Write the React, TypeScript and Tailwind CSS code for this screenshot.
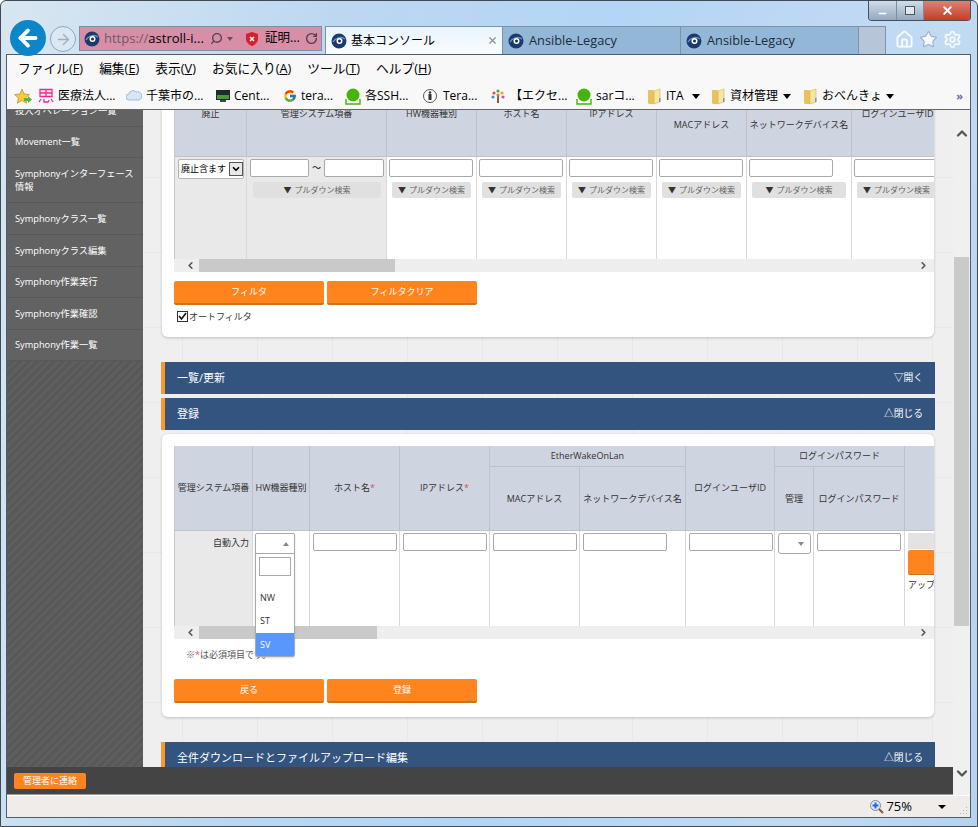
import React from "react";
import { ArrowLeft, ArrowRight, ChevronDown, ChevronLeft, ChevronRight, ChevronUp, Home, RotateCw, Search, Settings, Star, X, Minus } from "lucide-react";
import { FcGoogle } from "react-icons/fc";

const Fav = () => (
  <svg width="16" height="16" viewBox="0 0 16 16" className="shrink-0">
    <circle cx="8" cy="8" r="7.5" fill="#1d3a6e" />
    <path d="M2 9c2-4 8-6 12-3" stroke="#6f93c4" strokeWidth="1.4" fill="none" />
    <circle cx="8.5" cy="8" r="3" fill="#fff" />
    <circle cx="8.5" cy="8" r="1.5" fill="#17305e" />
  </svg>
);
const Folder = () => (
  <svg width="15" height="17" viewBox="0 0 15 17" className="shrink-0">
    <path d="M1 2h5l1 1v13H2l-1-1z" fill="#e8c35c" />
    <path d="M7 3l6-2v13l-6 2z" fill="#f8e59d" stroke="#d8b24e" strokeWidth=".6" />
    <rect x="12" y="10" width="1.5" height="4" fill="#5aa0d8" />
  </svg>
);
const Caret = () => <span className="ml-[6px] h-0 w-0 border-x-[4.5px] border-t-[5px] border-x-transparent border-t-black" />;
const GreenQ = () => (
  <svg width="16" height="18" viewBox="0 0 16 18" className="shrink-0">
    <path d="M1 12v5h14v-5" stroke="#46b40a" strokeWidth="1.4" fill="#fff" />
    <circle cx="8" cy="8" r="6.5" fill="#46b40a" />
  </svg>
);

const favItems: { icon: React.ReactNode; label: string; w: number; mr: number; gap: number; caret?: boolean }[] = [
  {
    icon: (
      <svg width="16" height="16" viewBox="0 0 16 16" className="shrink-0">
        <path d="M2 1.500h12v7H2zM2 5h12M8 1.500v7M1 14l2-3M6 11v3h4l1-2M13 11l2 3" stroke="#ec2a8c" strokeWidth="1.3" fill="#fff5f0" />
      </svg>
    ),
    label: "医療法人...",
    w: 60,
    mr: 8,
    gap: 4,
  },
  {
    icon: (
      <svg width="16" height="16" viewBox="0 0 16 16" className="shrink-0">
        <path d="M3 12a3 3 0 0 1 0-6 4 4 0 0 1 7-2 3.500 3.500 0 0 1 3 8z" fill="#d8e6f4" stroke="#9cbbdc" />
      </svg>
    ),
    label: "千葉市の...",
    w: 60,
    mr: 9,
    gap: 4,
  },
  {
    icon: (
      <svg width="16" height="16" viewBox="0 0 16 16" className="shrink-0">
        <rect x="1" y="2" width="14" height="10" fill="#1f2a33" />
        <rect x="2" y="7" width="12" height="4" fill="#4a9a3a" />
        <rect x="5" y="12" width="6" height="2" fill="#444" />
      </svg>
    ),
    label: "Cent...",
    w: 39,
    mr: 10,
    gap: 3,
  },
  { icon: <FcGoogle size={14} className="shrink-0" />, label: "tera...", w: 36, mr: 8, gap: 4 },
  { icon: <GreenQ />, label: "各SSH...", w: 49, mr: 8, gap: 4 },
  {
    icon: (
      <svg width="16" height="16" viewBox="0 0 16 16" className="shrink-0">
        <circle cx="8" cy="8" r="6.500" fill="#fff" stroke="#555" />
        <rect x="6.500" y="6" width="3" height="6" fill="#333" />
        <circle cx="8" cy="4.500" r="1.300" fill="#333" />
      </svg>
    ),
    label: "Tera...",
    w: 37,
    mr: 10,
    gap: 5,
  },
  {
    icon: (
      <svg width="16" height="16" viewBox="0 0 16 16" className="shrink-0">
        <rect x="7" y="8" width="2" height="7" fill="#8a5a3a" />
        <circle cx="4" cy="5" r="1.600" fill="#e0574f" />
        <circle cx="8" cy="3" r="1.600" fill="#4aa84a" />
        <circle cx="12" cy="5" r="1.600" fill="#e8a62f" />
        <circle cx="3" cy="9" r="1.600" fill="#4a8fd8" />
        <circle cx="13" cy="9" r="1.600" fill="#c05ab0" />
        <circle cx="8" cy="7" r="1.600" fill="#e8743a" />
      </svg>
    ),
    label: "【エクセ...",
    w: 58,
    mr: 8,
    gap: 4,
  },
  { icon: <GreenQ />, label: "sarコ...", w: 42, mr: 9, gap: 4 },
  { icon: <Folder />, label: "ITA", w: 20, mr: 11, gap: 4, caret: true },
  { icon: <Folder />, label: "資材管理", w: 47, mr: 12, gap: 4, caret: true },
  { icon: <Folder />, label: "おべんきょ", w: 58, mr: 0, gap: 4, caret: true },
];

const menu = [
  ["ファイル(", "F", ")"],
  ["編集(", "E", ")"],
  ["表示(", "V", ")"],
  ["お気に入り(", "A", ")"],
  ["ツール(", "T", ")"],
  ["ヘルプ(", "H", ")"],
];

const side: [string, string][] = [
  ["投入オペレーション一覧", "h-[31.500px] -mt-[15px]"],
  ["Movement一覧", "h-[31.500px]"],
  ["Symphonyインターフェース情報", "h-[45px]"],
  ["Symphonyクラス一覧", "h-[32px]"],
  ["Symphonyクラス編集", "h-[31.500px]"],
  ["Symphony作業実行", "h-[31.500px]"],
  ["Symphony作業確認", "h-[31.500px]"],
  ["Symphony作業一覧", "h-[31.500px]"],
];

const H = ({ children, className = "" }: { children?: React.ReactNode; className?: string }) => (
  <div className={`flex items-center justify-center whitespace-nowrap border-r border-b border-[#bfc2c6] bg-[#ced5e0] text-[9px] text-[#333] ${className}`}>{children}</div>
);
const Req = () => <span className="text-[#e05050]">*</span>;
const Inp = ({ className = "w-[84px]" }: { className?: string }) => (
  <div className={`h-[18px] shrink-0 rounded-[2px] border border-[#a9a9a9] bg-white ${className}`} />
);
const Pull = ({ className = "w-[79px]" }: { className?: string }) => (
  <div className={`mt-[5px] flex h-[16px] items-center justify-center whitespace-nowrap rounded-[2px] bg-[#e0e0e0] text-[8px] text-[#666] ${className}`}>
    <span className="mr-[3px] text-[#333]">▼</span>プルダウン検索
  </div>
);
const FCell = ({ className = "w-[84px]", pull = "w-[79px]" }: { className?: string; pull?: string }) => (
  <div className="border-r border-[#d8d8d8] bg-white pl-[2px] pt-[2px]">
    <Inp className={className} />
    <div className="pl-[3px]">
      <Pull className={pull} />
    </div>
  </div>
);
const Cell = ({ children }: { children?: React.ReactNode }) => (
  <div className="overflow-hidden border-r border-[#d8d8d8] bg-white pl-[3px] pt-[2px]">{children}</div>
);
const HScroll = ({ thumb }: { thumb: string }) => (
  <div className="flex h-[13px] items-center bg-[#eeeeee]">
    <div className="flex w-[25px] justify-center pl-[7px]">
      <ChevronLeft size={11} strokeWidth={3.500} className="text-[#555]" />
    </div>
    <div className={`h-full bg-[#c9c9c9] ${thumb}`} />
    <div className="flex-1" />
    <div className="flex w-[22px] justify-center">
      <ChevronRight size={11} strokeWidth={3.500} className="text-[#555]" />
    </div>
  </div>
);
const Btn = ({ children }: { children: React.ReactNode }) => (
  <div className="flex h-[24px] w-[150px] items-center justify-center rounded-[2px] border-b-2 border-[#c9721f] bg-[#ff841e] text-[9px] text-white">{children}</div>
);
const Bar = ({ title, right, className = "" }: { title: string; right: string; className?: string }) => (
  <div className={`flex h-[32px] w-[774px] shrink-0 items-center justify-between border-l-4 border-[#fb982c] bg-[#32547f] pl-[12px] pr-[12px] text-white ${className}`}>
    <span className="text-[11px]">{title}</span>
    <span className="text-[9.750px]">{right}</span>
  </div>
);

export default function App() {
  return (
    <div className="relative flex h-[827px] w-[978px] flex-col overflow-hidden rounded-t-[6px] border border-[#3f4a55] bg-[linear-gradient(100deg,#d8e6f1_0%,#bcd8f1_30%,#b4d5f7_55%,#c2dbf2_85%,#b5d3f0_100%)] font-['Open_Sans','Noto_Sans_CJK_JP',sans-serif] text-black">
      {/* window controls */}
      <div className="flex h-[25px] shrink-0 justify-end pr-[6px]">
        <div className="flex h-[20px] overflow-hidden rounded-b-[4px] border border-t-0 border-[#48505a]">
          <div className="flex w-[28px] items-center justify-center border-r border-[#7f8c99] bg-[linear-gradient(#d0dde9,#93a8bd)]">
            <Minus size={11} strokeWidth={3} className="mt-[5px] text-white" />
          </div>
          <div className="flex w-[27px] items-center justify-center border-r border-[#7f8c99] bg-[linear-gradient(#d0dde9,#93a8bd)]">
            <div className="h-[9px] w-[10px] border-[1.500px] border-[#4d5560] bg-white/60" />
          </div>
          <div className="flex w-[46px] items-center justify-center bg-[linear-gradient(#d98474,#c43d28)]">
            <X size={13} strokeWidth={3.500} className="text-white" />
          </div>
        </div>
      </div>

      {/* address + tabs */}
      <div className="z-10 flex h-[28px] shrink-0 items-start pl-[9px]">
        <div className="-mt-[6px] flex h-[36px] w-[36px] shrink-0 items-center justify-center rounded-full bg-[#0d86c9]">
          <ArrowLeft size={26} strokeWidth={3.500} className="text-white" />
        </div>
        <div className="ml-[4px] flex h-[26px] w-[26px] shrink-0 items-center justify-center rounded-full border border-[#8fa7bd] bg-white/20">
          <ArrowRight size={17} strokeWidth={2} className="text-[#9db0c2]" />
        </div>
        <div className="ml-[3px] flex h-[25px] w-[243px] shrink-0 items-center border border-[#7f8ea0] bg-[#d98ea8] pl-[4px] text-[13px]">
          <Fav />
          <span className="ml-[4px] w-[106px] whitespace-nowrap">
            <span className="text-[#6b5a66]">https://</span>astroll-i...
          </span>
          <Search size={13} strokeWidth={2.500} className="-scale-x-100 text-[#4a4450]" />
          <span className="ml-[4px] h-0 w-0 border-x-[3.500px] border-t-[4px] border-x-transparent border-t-[#66525f]" />
          <svg width="12" height="14" viewBox="0 0 12 14" className="ml-[13px]">
            <path d="M6 0l6 2v5c0 3-3 6-6 7-3-1-6-4-6-7V2z" fill="#d8202c" />
            <path d="M4 5l4 4M8 5L4 9" stroke="#fff" strokeWidth="1.500" />
          </svg>
          <span className="ml-[7px] w-[39px] whitespace-nowrap text-[12.500px]">証明...</span>
          <RotateCw size={13} strokeWidth={2.500} className="ml-[1px] text-[#4a4450]" />
        </div>
        <div className="ml-[3px] flex h-[28px] w-[178px] shrink-0 items-center border border-b-0 border-[#7f93a8] bg-[linear-gradient(#e9f4fd,#fafdff)] pl-[5px] text-[12px]">
          <Fav />
          <span className="ml-[4px] whitespace-nowrap">基本コンソール</span>
          <X size={11} strokeWidth={2.500} className="ml-auto mr-[4px] text-[#8e8e8e]" />
        </div>
        {[0, 1].map((i) => (
          <div key={i} className="flex h-[28px] w-[178px] shrink-0 items-center border-r border-t border-[#7f93a8] bg-[#93b7d6] pl-[5px] text-[12.750px] text-[#1c2c3c]">
            <Fav />
            <span className="ml-[5px] whitespace-nowrap">Ansible-Legacy</span>
          </div>
        ))}
        <div className="h-[28px] w-[27px] shrink-0 border-r border-t border-[#7f93a8] bg-[#b6c6d8]" />
        <div className="ml-[9px] mt-[4px] flex gap-[5px] text-white">
          <Home size={19} strokeWidth={2.400} className="text-[#f6f9fc]" />
          <Star size={19} fill="#f6f9fc" strokeWidth={1.500} className="text-[#9db4ca]" />
          <Settings size={19} strokeWidth={2.200} className="text-[#f6f9fc]" />
        </div>
      </div>

      {/* frame */}
      <div className="ml-[5px] mr-[6px] flex min-h-0 flex-1 flex-col border border-[#4f5c69] bg-[#f8f8f8]">
        <div className="flex h-[28px] shrink-0 items-center gap-[16px] pl-[11px] text-[12.750px]">
          {menu.map(([a, b, c]) => (
            <span key={a} className="whitespace-nowrap">
              {a}
              <span className="underline">{b}</span>
              {c}
            </span>
          ))}
        </div>
        <div className="flex h-[27px] shrink-0 items-center border-b border-[#666] pl-[7px] text-[12px]">
          <svg width="18" height="17" viewBox="0 0 18 17" className="mr-[6px] shrink-0">
            <path d="M8 1l2.200 5 5.300.5-4 3.500 1.200 5.200L8 12.500 3.300 15.200 4.500 10l-4-3.500L5.800 6z" fill="#f5cc3a" stroke="#b8902a" strokeWidth=".7" />
            <path d="M10 10h4V8l4 3.500-4 3.500v-2h-4z" fill="#5ab53c" />
          </svg>
          {favItems.map((f) => (
            <div key={f.label} className="flex shrink-0 items-center" style={{ marginRight: f.mr }}>
              {f.icon}
              <span className="whitespace-nowrap" style={{ marginLeft: f.gap, width: f.w }}>
                {f.label}
              </span>
              {f.caret && <Caret />}
            </div>
          ))}
          <span className="ml-auto mr-[7px] text-[11px] font-bold text-[#6a6aa8]">»</span>
        </div>

        {/* viewport */}
        <div className="flex min-h-0 flex-1">
          <div className="flex w-[946px] shrink-0 flex-col">
            <div className="flex min-h-0 flex-1 overflow-hidden">
              {/* sidebar */}
              <div className="flex w-[136px] shrink-0 flex-col overflow-hidden bg-[repeating-linear-gradient(-45deg,#585858,#585858_3px,#5e5e5e_3px,#5e5e5e_6px)] text-[9.250px] leading-[13px] text-white">
                {side.map(([t, h]) => (
                  <div key={t} className={`flex shrink-0 items-center border-b border-[#585858] bg-[#626262] pl-[8px] pr-[6px] ${h}`}>
                    <span>{t}</span>
                  </div>
                ))}
              </div>

              {/* main */}
              <div className="flex min-w-0 flex-1 flex-col bg-[#efefef] bg-[linear-gradient(#e8e8e8_1px,transparent_1px),linear-gradient(90deg,#e8e8e8_1px,transparent_1px)] bg-[size:75px_75px] bg-[position:39px_67px] pl-[18px]">
                {/* filter card */}
                <div className="-mt-[50px] ml-px w-[772px] shrink-0 rounded-[6px] bg-white pb-[14px] pl-[12px] pt-[12px] shadow-[0_1px_3px_rgba(0,0,0,0.2)]">
                  <div className="overflow-hidden">
                    <div className="grid w-[769px] grid-cols-[72px_140px_90px_90px_90px_90px_105px_92px] grid-rows-[21px_64px_102px] border-l border-[#c8c8c8]">
                      <H className="row-span-2">廃止</H>
                      <H className="row-span-2">管理システム項番</H>
                      <H className="row-span-2">HW機器種別</H>
                      <H className="row-span-2">ホスト名</H>
                      <H className="row-span-2">IPアドレス</H>
                      <H className="col-span-2">EtherWakeOnLan</H>
                      <H className="row-span-2">ログインユーザID</H>
                      <H>MACアドレス</H>
                      <H>ネットワークデバイス名</H>
                      <div className="border-r border-[#d8d8d8] bg-[#e9e9e9] pl-[3px] pt-[2px]">
                        <div className="flex h-[20px] w-[66px] items-center rounded-[2px] border border-[#b5b5b5] bg-white pl-[2px] text-[9px]">
                          <span className="whitespace-nowrap">廃止含ます</span>
                          <span className="ml-auto flex h-[14px] w-[14px] items-center justify-center border border-[#555] bg-[#e8e8e8]">
                            <ChevronDown size={10} strokeWidth={4} />
                          </span>
                        </div>
                      </div>
                      <div className="border-r border-[#d8d8d8] bg-[#e9e9e9] pl-[3px] pt-[2px]">
                        <div className="flex items-center">
                          <Inp className="w-[59px]" />
                          <span className="w-[15px] text-center text-[9px]">～</span>
                          <Inp className="w-[60px]" />
                        </div>
                        <div className="pl-[3px]">
                          <Pull className="w-[128px]" />
                        </div>
                      </div>
                      <FCell />
                      <FCell />
                      <FCell />
                      <FCell />
                      <FCell pull="w-[94px]" />
                      <FCell />
                    </div>
                  </div>
                  <HScroll thumb="w-[196px]" />
                  <div className="mt-[9px] flex gap-[3px]">
                    <Btn>フィルタ</Btn>
                    <Btn>フィルタクリア</Btn>
                  </div>
                  <div className="mt-[5px] flex h-[13px] items-center pl-[3px] text-[9px] text-[#333]">
                    <svg width="11" height="11" viewBox="0 0 11 11" className="mr-[1px]">
                      <rect x=".5" y=".5" width="10" height="10" fill="#fff" stroke="#333" />
                      <path d="M2 5l2.500 3L9 2" stroke="#111" strokeWidth="1.600" fill="none" />
                    </svg>
                    オートフィルタ
                  </div>
                </div>

                <Bar title="一覧/更新" right="▽開く" className="mt-[25px]" />
                <Bar title="登録" right="△閉じる" className="mt-[4px]" />

                {/* register card */}
                <div className="ml-px mt-[4px] w-[772px] shrink-0 rounded-[6px] bg-white pb-[14px] pl-[12px] pt-[12px] shadow-[0_1px_3px_rgba(0,0,0,0.2)]">
                  <div className="relative">
                    <div className="overflow-hidden">
                      <div className="grid w-[790px] grid-cols-[78px_57px_90px_90px_90px_106px_89px_39px_91px_50px] grid-rows-[21px_64px_95px] border-l border-[#c8c8c8]">
                        <H className="row-span-2">管理システム項番</H>
                        <H className="row-span-2">HW機器種別</H>
                        <H className="row-span-2">
                          ホスト名
                          <Req />
                        </H>
                        <H className="row-span-2">
                          IPアドレス
                          <Req />
                        </H>
                        <H className="col-span-2">EtherWakeOnLan</H>
                        <H className="row-span-2">ログインユーザID</H>
                        <H className="col-span-2">ログインパスワード</H>
                        <H className="row-span-2" />
                        <H>MACアドレス</H>
                        <H>ネットワークデバイス名</H>
                        <H>管理</H>
                        <H>ログインパスワード</H>
                        <div className="border-r border-[#d8d8d8] bg-[#e9e9e9] pr-[3px] pt-[5px] text-right text-[9px] text-[#333]">自動入力</div>
                        <Cell />
                        <Cell>
                          <Inp />
                        </Cell>
                        <Cell>
                          <Inp />
                        </Cell>
                        <Cell>
                          <Inp />
                        </Cell>
                        <Cell>
                          <Inp />
                        </Cell>
                        <Cell>
                          <Inp />
                        </Cell>
                        <Cell>
                          <div className="flex h-[21px] w-[33px] items-center justify-end rounded-[3px] border border-[#a9a9a9] pr-[6px]">
                            <span className="h-0 w-0 border-x-[3px] border-t-[4px] border-x-transparent border-t-[#888]" />
                          </div>
                        </Cell>
                        <Cell>
                          <Inp />
                        </Cell>
                        <Cell>
                          <div className="h-[16px] w-[60px] bg-[#e3e3e3]" />
                          <div className="mt-px h-[25px] w-[60px] rounded-[2px] border-b border-[#c9721f] bg-[#ff841e]" />
                          <div className="mt-[3px] whitespace-nowrap text-[9px] text-[#333]">アップロード</div>
                        </Cell>
                      </div>
                    </div>
                    <HScroll thumb="w-[178px]" />
                    {/* open select */}
                    <div className="absolute left-[81px] top-[87px] w-[40px] overflow-hidden rounded-[2px] border border-[#a9a9a9] bg-white text-[9px] text-[#333] shadow-[0_1px_2px_rgba(0,0,0,0.15)]">
                      <div className="flex h-[20px] items-center justify-end border-b border-[#a9a9a9] pr-[5px]">
                        <span className="h-0 w-0 border-x-[3px] border-b-[4px] border-x-transparent border-b-[#888]" />
                      </div>
                      <div className="mx-[3px] mt-[3px] h-[19px] border border-[#a9a9a9]" />
                      <div className="mt-[10px] flex h-[23px] items-center pl-[4px]">NW</div>
                      <div className="flex h-[24px] items-center pl-[4px]">ST</div>
                      <div className="flex h-[23px] items-center bg-[#5897fb] pl-[4px] text-white">SV</div>
                    </div>
                  </div>
                  <div className="mt-[9px] pl-[12px] text-[9px] leading-[14px] text-[#555]">
                    ※<Req />は必須項目です。
                  </div>
                  <div className="mt-[17px] flex gap-[3px]">
                    <Btn>戻る</Btn>
                    <Btn>登録</Btn>
                  </div>
                </div>

                <Bar title="全件ダウンロードとファイルアップロード編集" right="△閉じる" className="mt-[25px]" />
              </div>
            </div>

            <div className="flex h-[28px] shrink-0 items-center border-b border-[#999] bg-[#444444] pl-[7px]">
              <div className="flex h-[16px] w-[72px] items-center justify-center rounded-[2px] bg-[#ff841e] text-[9px] text-white">管理者に連絡</div>
            </div>
          </div>

          {/* vertical scrollbar */}
          <div className="flex w-[17px] shrink-0 flex-col bg-[#f0f0f0] pl-px">
            <div className="flex h-[147px] shrink-0 justify-center pt-[15px]">
              <ChevronUp size={17} strokeWidth={3.500} className="text-[#555]" />
            </div>
            <div className="h-[369px] w-[15px] shrink-0 bg-[#cacaca]" />
            <div className="mt-auto flex justify-center pb-[13px]">
              <ChevronDown size={17} strokeWidth={3.500} className="text-[#555]" />
            </div>
          </div>
        </div>

        {/* status bar */}
        <div className="flex h-[22px] shrink-0 items-center border-t border-white bg-[#efecea] pr-[2px] text-[13px]">
          <svg width="14" height="14" viewBox="0 0 14 14" className="ml-auto">
            <circle cx="5.500" cy="5.500" r="5" fill="#dfeaf6" stroke="#7d8a99" />
            <path d="M5.500 2.500v6M2.500 5.500h6" stroke="#1e6fd0" strokeWidth="2" />
            <path d="M9 9l4 4" stroke="#8a5a2a" strokeWidth="2" />
          </svg>
          <span className="ml-[2px]">75%</span>
          <span className="ml-[26px] h-0 w-0 border-x-[4px] border-t-[4px] border-x-transparent border-t-black" />
          <svg width="8" height="8" viewBox="0 0 8 8" className="ml-[14px] mt-[8px]">
            <path d="M6 0h1v1H6zM3 3h1v1H3zM6 3h1v1H6zM0 6h1v1H0zM3 6h1v1H3zM6 6h1v1H6z" fill="#b8b4b0" />
          </svg>
        </div>
      </div>
      <div className="h-[8px] shrink-0" />
    </div>
  );
}
